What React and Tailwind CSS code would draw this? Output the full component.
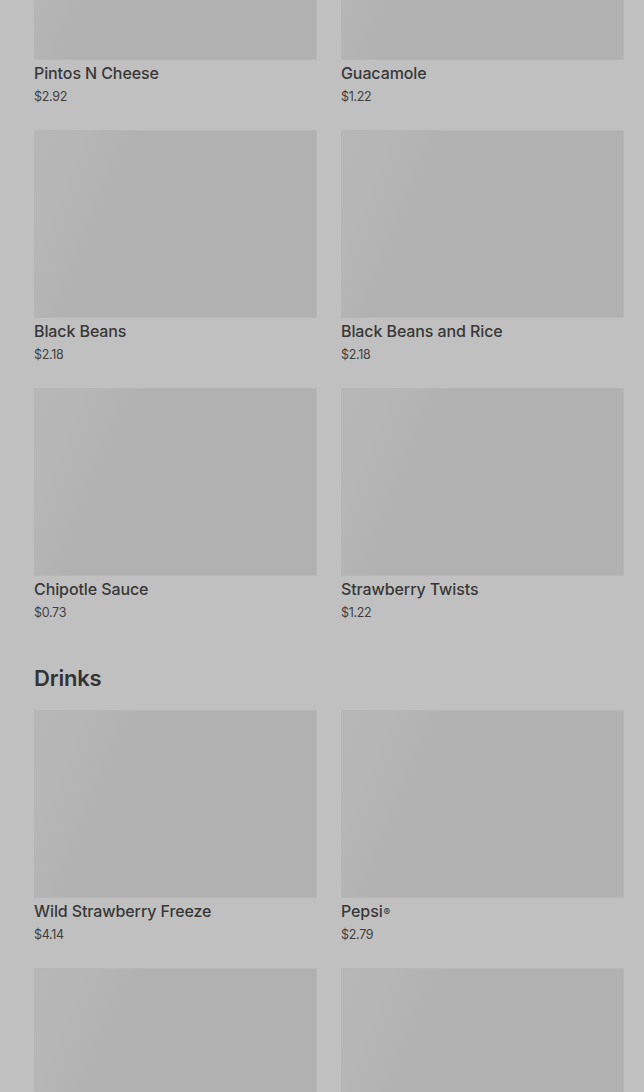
import React from "react";

const sides = [
  { name: "Pintos N Cheese", price: "$2.92" },
  { name: "Guacamole", price: "$1.22" },
  { name: "Black Beans", price: "$2.18" },
  { name: "Black Beans and Rice", price: "$2.18" },
  { name: "Chipotle Sauce", price: "$0.73" },
  { name: "Strawberry Twists", price: "$1.22" },
];

const drinks = [
  { name: "Wild Strawberry Freeze", price: "$4.14" },
  { name: "Pepsi®", price: "$2.79" },
  { name: "", price: "" },
  { name: "", price: "" },
];

function Card({ item }) {
  const isPepsi = item.name === "Pepsi®";
  return (
    <div className="flex flex-col">
      <div className="h-[188px] w-full border border-[#b6b6b6] bg-[linear-gradient(112deg,#b7b7b7_0%,#b6b6b6_14%,#b1b1b1_30%,#b1b1b1_100%)]" />
      <div className="mt-[1px] text-[16px] leading-6 font-medium tracking-[-0.1px] text-[#383838]">
        {isPepsi ? (
          <>
            Pepsi<sup className="text-[10px] relative -top-[1px] ml-[1px]">®</sup>
          </>
        ) : (
          item.name
        )}
      </div>
      <div className="mt-[2px] text-[12.5px] leading-5 tracking-tight text-[#404040]">{item.price}</div>
    </div>
  );
}

export default function App() {
  return (
    <div
      className="h-[1092px] w-[644px] overflow-hidden bg-[#c0c0c0]"
      style={{ fontFamily: "Inter, 'Liberation Sans', sans-serif" }}
    >
      <div className="-mt-[128px] pl-[34px] pr-[20px]">
        <div className="grid grid-cols-2 gap-x-6 gap-y-[23px]">
          {sides.map((s) => (
            <Card key={s.name} item={s} />
          ))}
        </div>
        <h2 className="mt-[39px] mb-4 text-[22px] leading-8 font-semibold tracking-[-0.2px] text-[#333333]">
          Drinks
        </h2>
        <div className="grid grid-cols-2 gap-x-6 gap-y-[23px]">
          {drinks.map((s, i) => (
            <Card key={i} item={s} />
          ))}
        </div>
      </div>
    </div>
  );
}
